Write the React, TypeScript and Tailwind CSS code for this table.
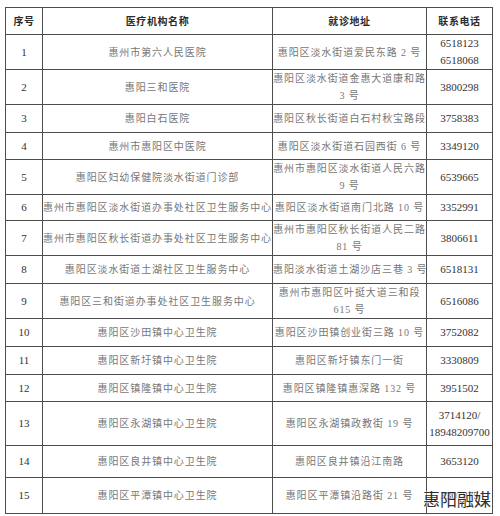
type Row = {
  no: string;
  name: string;
  addr: string[];
  tel: string[];
  h: string;
};

// Row heights are read off the scanned sheet, so they differ a little per row.
const rows: Row[] = [
  { no: "1", name: "惠州市第六人民医院", addr: ["惠阳区淡水街道爱民东路 2 号"], tel: ["6518123", "6518068"], h: "h-[34px]" },
  { no: "2", name: "惠阳三和医院", addr: ["惠阳区淡水街道金惠大道康和路", "3 号"], tel: ["3800298"], h: "h-[33px]" },
  { no: "3", name: "惠阳白石医院", addr: ["惠阳区秋长街道白石村秋宝路段"], tel: ["3758383"], h: "h-[28px]" },
  { no: "4", name: "惠州市惠阳区中医院", addr: ["惠阳区淡水街道石园西街 6 号"], tel: ["3349120"], h: "h-[27px]" },
  { no: "5", name: "惠阳区妇幼保健院淡水街道门诊部", addr: ["惠州市惠阳区淡水街道人民六路", "9 号"], tel: ["6539665"], h: "h-[34px]" },
  { no: "6", name: "惠州市惠阳区淡水街道办事处社区卫生服务中心", addr: ["惠阳区淡水街道南门北路 10 号"], tel: ["3352991"], h: "h-[26px]" },
  { no: "7", name: "惠州市惠阳区秋长街道办事处社区卫生服务中心", addr: ["惠州市惠阳区秋长街道人民二路", "81 号"], tel: ["3806611"], h: "h-[34px]" },
  { no: "8", name: "惠阳区淡水街道土湖社区卫生服务中心", addr: ["惠阳淡水街道土湖沙店三巷 3 号"], tel: ["6518131"], h: "h-[28px]" },
  { no: "9", name: "惠阳区三和街道办事处社区卫生服务中心", addr: ["惠州市惠阳区叶挺大道三和段", "615 号"], tel: ["6516086"], h: "h-[33px]" },
  { no: "10", name: "惠阳区沙田镇中心卫生院", addr: ["惠阳区沙田镇创业街三路 10 号"], tel: ["3752082"], h: "h-[28px]" },
  { no: "11", name: "惠阳区新圩镇中心卫生院", addr: ["惠阳区新圩镇东门一街"], tel: ["3330809"], h: "h-[28px]" },
  { no: "12", name: "惠阳区镇隆镇中心卫生院", addr: ["惠阳区镇隆镇惠深路 132 号"], tel: ["3951502"], h: "h-[27px]" },
  { no: "13", name: "惠阳区永湖镇中心卫生院", addr: ["惠阳区永湖镇政教街 19 号"], tel: ["3714120/", "18948209700"], h: "h-[44px]" },
  { no: "14", name: "惠阳区良井镇中心卫生院", addr: ["惠阳区良井镇沿江南路"], tel: ["3653120"], h: "h-[32px]" },
  { no: "15", name: "惠阳区平潭镇中心卫生院", addr: ["惠阳区平潭镇沿路街 21 号"], tel: ["3307875"], h: "h-[36px]" },
];

const cell = "border border-[#4d4d4d] p-0 text-center align-middle";
const cjk = "text-[10px] tracking-[0.9px] text-[#777] whitespace-nowrap";
const num = "text-[11px] text-[#333]";

export default function App() {
  return (
    <div className="relative h-[516px] w-[500px] overflow-hidden bg-white pl-[5px] pt-[7px] font-['Liberation_Serif','Noto_Sans_CJK_SC',serif]">
      <table className="w-[487px] table-fixed border-collapse">
        <colgroup>
          <col className="w-[37px]" />
          <col className="w-[230px]" />
          <col className="w-[154px]" />
          <col className="w-[66px]" />
        </colgroup>
        <thead>
          <tr className="h-[27px]">
            {["序号", "医疗机构名称", "就诊地址", "联系电话"].map((t) => (
              <th
                key={t}
                className={`${cell} text-[10px] font-bold tracking-[0.6px] text-[#2b2b2b]`}
              >
                {t}
              </th>
            ))}
          </tr>
        </thead>
        <tbody>
          {rows.map((r) => (
            <tr key={r.no} className={r.h}>
              <td className={`${cell} ${num}`}>{r.no}</td>
              <td className={`${cell} ${cjk}`}>{r.name}</td>
              <td className={`${cell} ${cjk} leading-[17px]`}>
                {r.addr.map((a) => (
                  <div key={a}>{a}</div>
                ))}
              </td>
              <td className={`${cell} ${num} leading-[17px]`}>
                {r.tel.map((t) => (
                  <div key={t}>{t}</div>
                ))}
              </td>
            </tr>
          ))}
        </tbody>
      </table>
      {/* publisher watermark stamped over the bottom-right corner */}
      <div className="absolute left-[423px] top-[489px] text-[17px] leading-[24px] text-[#2e2e2e] [text-shadow:0_0_2px_#fff,0_0_2px_#fff]">
        惠阳融媒
      </div>
    </div>
  );
}
